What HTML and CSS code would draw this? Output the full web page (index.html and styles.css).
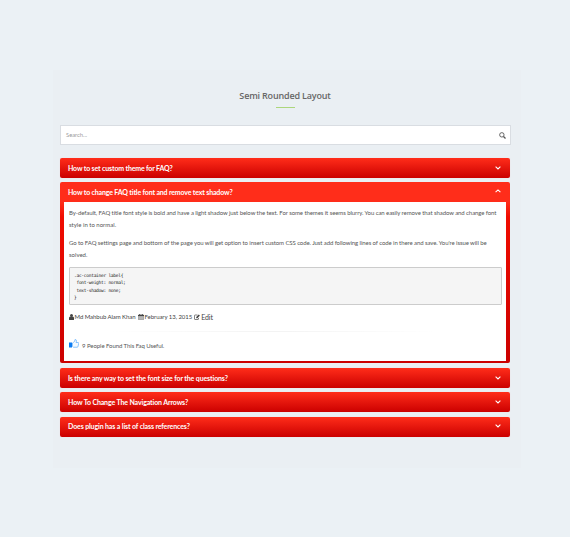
FILE: index.html
```html
<!DOCTYPE html>
<html lang="en">
<head>
<meta charset="utf-8">
<title>Semi Rounded Layout</title>
<link rel="stylesheet" href="styles.css">
</head>
<body>
<main class="panel">
  <h1 class="title">Semi Rounded Layout</h1>
  <div class="rule"></div>
  <div class="search"><span>Search...</span>
    <svg width="7" height="7" viewBox="0 0 14 14"><circle cx="5.7" cy="5.7" r="4.4" fill="none" stroke="#555" stroke-width="1.8"/><path d="M9 9l4 4" stroke="#555" stroke-width="2.4"/></svg>
  </div>
  <section class="faq">
    <div class="bar"><span class="q1">How to set custom theme for FAQ?</span><svg class="arrow" viewBox="0 0 6 4"><path d="M.6.7L3 3 5.4.7"/></svg></div>
    <article class="open">
      <div class="head"><span class="q2">How to change FAQ title font and remove text shadow?</span><svg class="arrow" viewBox="0 0 6 4"><path d="M.6 3.2L3 .9 5.4 3.2"/></svg></div>
      <div class="body">
        <p><span class="l1">By-default, FAQ title font style is bold and have a light shadow just below the text. For some themes it seems blurry. You can easily remove that shadow and change font</span><br>style in to normal.</p>
        <p><span class="l2">Go to FAQ settings page and bottom of the page you will get option to insert custom CSS code. Just add following lines of code in there and save. You're issue will be</span><br>solved.</p>
<pre>.ac-container label{
 font-weight: normal;
 text-shadow: none;
}</pre>
        <div class="meta">
          <svg width="5" height="6" viewBox="0 0 10 12"><circle cx="5" cy="3" r="3"/><path d="M0 11V8q0-3 2.5-3 2.5 2 5 0Q10 5 10 8v3q0 1-1 1H1q-1 0-1-1z"/></svg>
          <span class="author">Md Mahbub Alam Khan</span>
          <svg width="6" height="6" viewBox="0 0 12 12"><path fill="none" stroke="#555" d="M.5 2h11v9.500H.5zM.5 4.500h11M.5 8h11M4 4.500v7M8 4.500v7"/><path d="M0 2h12v2H0zM2.500 0h2v3h-2zM7.500 0h2v3h-2z"/></svg>
          <span class="date">February 13, 2015</span>
          <svg width="6" height="6" viewBox="0 0 12 12"><path fill="none" stroke="#444" stroke-width="1.300" d="M7 2H2Q1 2 1 3v7q0 1 1 1h6q1 0 1-1V8"/><path d="M4.500 8.500V6L9.500.8l2.200 2.200L7 8.500z"/></svg>
          <span class="edit">Edit</span>
        </div>
        <div class="divider"></div>
        <div class="useful">
          <svg width="10" height="9" viewBox="0 0 20 18"><path fill="#0d7cf2" d="M0 7h6v10H0z"/><path fill="#f4faff" stroke="#55a9fa" stroke-width="1.300" d="M7 8l4-3 1-4q3 0 3 3l-1 3h4q1.500 0 1.500 1.500L18 15q0 1.500-2 1.500H9L7 15z"/></svg>
          <span>9 People Found This Faq Useful.</span>
        </div>
      </div>
    </article>
    <div class="bar"><span class="q3">Is there any way to set the font size for the questions?</span><svg class="arrow" viewBox="0 0 6 4"><path d="M.6.7L3 3 5.400.7"/></svg></div>
    <div class="bar"><span class="q4">How To Change The Navigation Arrows?</span><svg class="arrow" viewBox="0 0 6 4"><path d="M.6.7L3 3 5.400.7"/></svg></div>
    <div class="bar last"><span class="q5">Does plugin has a list of class references?</span><svg class="arrow" viewBox="0 0 6 4"><path d="M.6.7L3 3 5.400.7"/></svg></div>
  </section>
</main>
</body>
</html>
```
FILE: styles.css
```css
* { box-sizing: border-box; }
body { margin: 0; height: 537px; padding: 70px 49px 0 53px; background: #ebf1f5; font-family: Lato, sans-serif; overflow: hidden; }
svg { flex: none; display: block; }
.panel { height: 398px; padding: 19px 11px 0 7px; background: #eaeff3; }
.title { margin: 0; height: 14px; font: 600 9px/14px "Open Sans", sans-serif; letter-spacing: -.18px; color: #666; text-align: center; }
.rule { width: 19px; height: 1px; margin: 4px auto 0; background: #acd67c; }
.search { height: 20px; margin: 17px -1px 0 0; padding: 0 4px 0 5px; display: flex; align-items: center; justify-content: space-between; background: #fff; border: 1px solid #d9dde2; font-size: 5.800px; line-height: 6px; color: #999; }
.search span { margin-top: -1px; }
.faq { margin-top: 13px; display: flex; flex-direction: column; gap: 4px; }
.bar, .head { height: 20px; padding: 0 9.500px 1px 8px; display: flex; align-items: center; justify-content: space-between; color: #fff; font-size: 7px; font-weight: 700; white-space: nowrap; }
.bar { border-radius: 2px; background: linear-gradient(#ff2d1a, #cb0000); box-shadow: 0 0 1px #f6c8c8; }
.last { margin-top: .6px; }
.q1, .q2 { letter-spacing: -.16px; }
.q3, .q4, .q5 { letter-spacing: -.13px; }
.arrow { width: 6px; height: 4px; fill: none; stroke: #fff; stroke-width: 1.100; }
.open { height: 181px; margin-bottom: 1px; padding: 0 4px 2px; border-radius: 2px; background: linear-gradient(#ff2d1a 0, #ff2d1a 20px, #f00c00 35px, #cb0000 100%); }
.head { margin: 0 -4px; }
.head .arrow { margin-top: -2px; }
.body { height: 159px; padding: 5px 4px 0 5px; background: #fff; color: #555; font-size: 6px; line-height: 12px; white-space: nowrap; }
.l1 { letter-spacing: -.08px; }
.l2 { letter-spacing: -.085px; }
p { margin: 0 0 6px; }
pre { margin: 0; height: 38px; padding: 4px; border: 1px solid #ccc; border-radius: 1px; background: #f5f5f5; color: #222; font: 4.600px/7.400px "DejaVu Sans Mono", monospace; letter-spacing: -.31px; }
.meta { display: flex; align-items: center; gap: 1px; height: 12px; margin-top: 6px; color: #444; fill: #444; letter-spacing: -.06px; }
.author { margin: 0 1px 0 -.5px; }
.date { margin-right: 1px; }
.edit { font-size: 7px; }
.divider { height: 1px; margin: 8px 65px 0 40px; background: linear-gradient(90deg, #fff, #f3f3f3, #fff); }
.useful { display: flex; align-items: flex-start; gap: 3px; margin-top: 7px; letter-spacing: -.06px; }
.useful span { margin-top: 1px; }
```
